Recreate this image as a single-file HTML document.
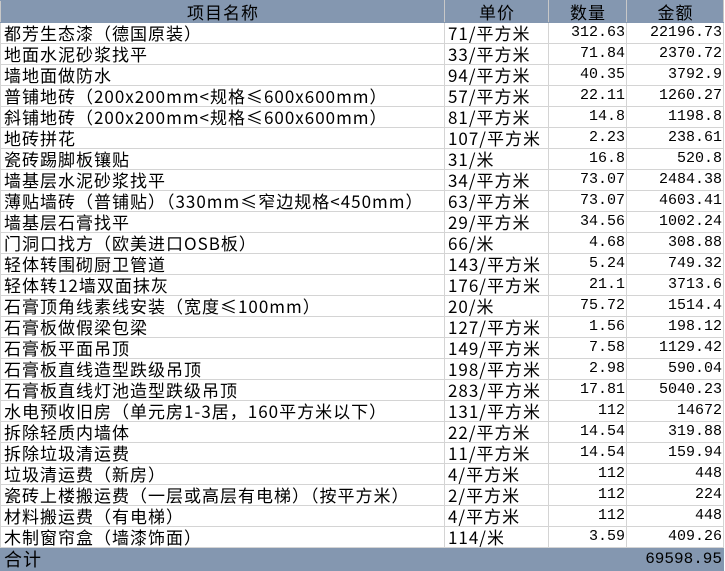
<!DOCTYPE html>
<html><head><meta charset="utf-8"><style>
html,body{margin:0;padding:0;background:#fff;width:725px;height:571px;overflow:hidden}
table{border-collapse:collapse;table-layout:fixed;width:723px;font-family:"Noto Sans CJK SC",sans-serif;font-size:17px;letter-spacing:1px;color:#000}
td{height:20px;padding:0 2px 0 3px;border:1px solid #d4d4d4;white-space:nowrap;overflow:hidden;line-height:20px}
td.n{text-align:right;font-family:"Liberation Mono",monospace;font-size:15px;letter-spacing:0;padding-right:1px}
tr.h td{background:#8497b0;text-align:center;height:21px;border-color:#8497b0 #c8c8c8;font-family:"Noto Sans CJK SC",sans-serif;font-size:17px}
tr.t td{background:#8497b0;font-size:18px;height:22px;border-color:#8497b0}
tr.t td.n{font-size:16px}
</style></head><body>
<table>
<colgroup><col style="width:444px"><col style="width:104px"><col style="width:78px"><col style="width:97px"></colgroup>
<tr class="h"><td>项目名称</td><td>单价</td><td>数量</td><td>金额</td></tr>
<tr><td>都芳生态漆（德国原装）</td><td>71/平方米</td><td class="n">312.63</td><td class="n">22196.73</td></tr>
<tr><td>地面水泥砂浆找平</td><td>33/平方米</td><td class="n">71.84</td><td class="n">2370.72</td></tr>
<tr><td>墙地面做防水</td><td>94/平方米</td><td class="n">40.35</td><td class="n">3792.9</td></tr>
<tr><td>普铺地砖（200x200mm&lt;规格≤600x600mm）</td><td>57/平方米</td><td class="n">22.11</td><td class="n">1260.27</td></tr>
<tr><td>斜铺地砖（200x200mm&lt;规格≤600x600mm）</td><td>81/平方米</td><td class="n">14.8</td><td class="n">1198.8</td></tr>
<tr><td>地砖拼花</td><td>107/平方米</td><td class="n">2.23</td><td class="n">238.61</td></tr>
<tr><td>瓷砖踢脚板镶贴</td><td>31/米</td><td class="n">16.8</td><td class="n">520.8</td></tr>
<tr><td>墙基层水泥砂浆找平</td><td>34/平方米</td><td class="n">73.07</td><td class="n">2484.38</td></tr>
<tr><td>薄贴墙砖（普铺贴）（330mm≤窄边规格&lt;450mm）</td><td>63/平方米</td><td class="n">73.07</td><td class="n">4603.41</td></tr>
<tr><td>墙基层石膏找平</td><td>29/平方米</td><td class="n">34.56</td><td class="n">1002.24</td></tr>
<tr><td>门洞口找方（欧美进口OSB板）</td><td>66/米</td><td class="n">4.68</td><td class="n">308.88</td></tr>
<tr><td>轻体转围砌厨卫管道</td><td>143/平方米</td><td class="n">5.24</td><td class="n">749.32</td></tr>
<tr><td>轻体转12墙双面抹灰</td><td>176/平方米</td><td class="n">21.1</td><td class="n">3713.6</td></tr>
<tr><td>石膏顶角线素线安装（宽度≤100mm）</td><td>20/米</td><td class="n">75.72</td><td class="n">1514.4</td></tr>
<tr><td>石膏板做假梁包梁</td><td>127/平方米</td><td class="n">1.56</td><td class="n">198.12</td></tr>
<tr><td>石膏板平面吊顶</td><td>149/平方米</td><td class="n">7.58</td><td class="n">1129.42</td></tr>
<tr><td>石膏板直线造型跌级吊顶</td><td>198/平方米</td><td class="n">2.98</td><td class="n">590.04</td></tr>
<tr><td>石膏板直线灯池造型跌级吊顶</td><td>283/平方米</td><td class="n">17.81</td><td class="n">5040.23</td></tr>
<tr><td>水电预收旧房（单元房1-3居，160平方米以下）</td><td>131/平方米</td><td class="n">112</td><td class="n">14672</td></tr>
<tr><td>拆除轻质内墙体</td><td>22/平方米</td><td class="n">14.54</td><td class="n">319.88</td></tr>
<tr><td>拆除垃圾清运费</td><td>11/平方米</td><td class="n">14.54</td><td class="n">159.94</td></tr>
<tr><td>垃圾清运费（新房）</td><td>4/平方米</td><td class="n">112</td><td class="n">448</td></tr>
<tr><td>瓷砖上楼搬运费（一层或高层有电梯）（按平方米）</td><td>2/平方米</td><td class="n">112</td><td class="n">224</td></tr>
<tr><td>材料搬运费（有电梯）</td><td>4/平方米</td><td class="n">112</td><td class="n">448</td></tr>
<tr><td>木制窗帘盒（墙漆饰面）</td><td>114/米</td><td class="n">3.59</td><td class="n">409.26</td></tr>
<tr class="t"><td>合计</td><td></td><td></td><td class="n">69598.95</td></tr>
</table>
</body></html>
